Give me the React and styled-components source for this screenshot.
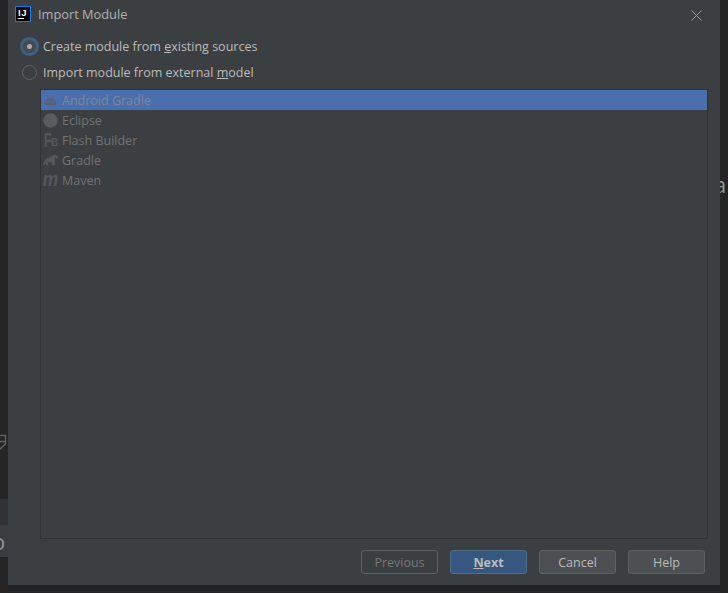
import React from 'react';
import styled, { createGlobalStyle } from 'styled-components';

const Global = createGlobalStyle`
  html, body { margin: 0; padding: 0; background: #242424; }
  #root { width: 728px; height: 593px; overflow: hidden; }
`;
const Page = styled.div`
  width: 728px; height: 593px; display: flex; align-items: flex-start; background: #232323;
  font-family: "Open Sans", "Noto Sans", sans-serif; font-size: 12.5px; color: #bbbbbb;
`;
const Side = styled.div`
  width: ${p => p.$w}px; height: 593px; flex: none; display: flex; flex-direction: column;
  overflow: hidden; background: #252525;
`;
const Band = styled.div`
  height: ${p => p.$h}px; flex: none; background: ${p => p.$bg || 'transparent'};
  display: flex; align-items: center;
`;
const ClippedLetter = styled.span`
  font: 22px/1 "Open Sans", sans-serif; color: #8f9498; flex: none; margin-left: ${p => p.$shift}px;
`;
const Dialog = styled.div`
  width: 712px; height: 585px; flex: none; background: #3c3f41; display: flex; flex-direction: column;
`;
const TitleBar = styled.div`
  height: 30px; flex: none; display: flex; align-items: center; padding: 0 18px 0 7px; gap: 7px;
`;
const Logo = styled.div`
  width: 16px; height: 16px; box-sizing: border-box; background: #000; border: 1px solid #087cfa; flex: none;
  display: flex; flex-direction: column; align-items: flex-start; padding: 2px 0 0 2px;
  color: #fff; font: 700 9.5px/7px "Liberation Sans", sans-serif; letter-spacing: 0.5px; margin-top: -2px;
`;
const LogoBar = styled.div`
  width: 6px; height: 1px; background: #fff; margin-top: 2px;
`;
const Title = styled.div`
  flex: 1; color: #afb1b3; margin-top: -2px; font-size: 12.8px;
`;
const Radios = styled.div`
  padding: 7px 0 0 14px; display: flex; flex-direction: column; gap: 8px; height: 59px; box-sizing: border-box; flex: none;
`;
const RadioRow = styled.div`
  display: flex; align-items: center; height: 18px; gap: 6px;
`;
const RadioOuter = styled.div`
  width: 15px; height: 15px; border-radius: 50%; flex: none; box-sizing: border-box;
  display: flex; align-items: center; justify-content: center;
  background: ${p => p.$on ? '#474b4e' : '#3c3f41'};
  border: 1px solid ${p => p.$on ? '#3d6185' : '#606263'};
  box-shadow: ${p => p.$on ? '0 0 0 2px #3d6185' : 'none'};
`;
const RadioDot = styled.div`
  width: 5px; height: 5px; border-radius: 50%; background: #a7a9ab;
`;
const Mn = styled.span`text-decoration: underline;`;
const ListBox = styled.div`
  margin: 0 12px 0 32px; height: 450px; flex: none; border: 1px solid #323232; box-sizing: border-box;
  display: flex; flex-direction: column;
`;
const Item = styled.div`
  height: 20px; flex: none; display: flex; align-items: center; padding-left: 2px; gap: 4px;
  color: #707274; background: ${p => p.$sel ? '#4b6eaf' : 'transparent'};
  ${p => p.$sel ? 'color: #7f8794;' : ''}
`;
const IconBox = styled.div`
  width: 15px; height: 16px; flex: none; display: flex; align-items: center; justify-content: center;
`;
const FbIcon = styled.div`
  width: 15px; height: 16px; flex: none; display: flex; align-items: flex-end; padding-left: 1px; box-sizing: border-box;
  color: #54575a; font-family: "Liberation Sans", sans-serif; font-weight: 700;
`;
const FbBig = styled.span`
  width: 7px; font-size: 20px; line-height: 16px; transform: scaleX(0.62); transform-origin: left center;
`;
const FbSmall = styled.span`
  width: 7px; font-size: 11px; line-height: 11px; transform: scaleX(0.9); transform-origin: left center;
`;
const MText = styled.span`
  font: italic 700 21px/16px "Liberation Sans", sans-serif; color: #54575a; margin-top: -2px; transform: scaleX(0.85);
`;
const Footer = styled.div`
  flex: 1; display: flex; justify-content: flex-end; align-items: flex-start; gap: 12px;
  padding: 11px 15px 0 0;
`;
const Btn = styled.div`
  width: 77px; height: 24px; box-sizing: border-box; border-radius: 3px; display: flex; align-items: center; justify-content: center;
  border: 1px solid ${p => p.$primary ? '#4c708c' : '#5e6060'};
  background: ${p => p.$primary ? '#365880' : p.$off ? 'transparent' : '#4c5052'};
  color: ${p => p.$off ? '#777777' : '#bbbbbb'};
  font-weight: ${p => p.$primary ? 700 : 400};
`;

const Close = () => (
  <svg width="11" height="11" viewBox="0 0 11 11" fill="none" stroke="#9a9c9e" strokeWidth="1">
    <path d="M.5.5l10 10M10.500.5l-10 10" />
  </svg>
);
const Android = () => (
  <svg width="13" height="10" viewBox="0 0 13 10">
    <path d="M.5 10C.5 6 3 3 6.500 3S12.500 6 12.500 10z" fill="#58607a" />
    <path d="M3 .300l1.800 3.200M10 .300l-1.800 3.200" stroke="#58607a" fill="none" />
    <circle cx="4" cy="7" r="1" fill="#4b6eaf" />
    <circle cx="9" cy="7" r="1" fill="#4b6eaf" />
  </svg>
);
const Eclipse = () => (
  <svg width="15" height="15" viewBox="0 0 15 15"><circle cx="7.500" cy="7.500" r="7.200" fill="#595c5e" /></svg>
);
const Elephant = () => (
  <svg width="16" height="12" viewBox="0 0 16 12" fill="#54575a">
    <path d="M0 11.500C.5 6.500 3.500 3 8 3 9.500 1 12.500-.5 14.800 1.300c1.300 1.200 1.200 3 .4 3.300-1 .3-1.200-1.300-2.400-1L12.500 11.500H9.500V8.500H5.500V11.500H3V9L1.200 11.500z" />
  </svg>
);
const Shield = () => (
  <svg width="7" height="18" viewBox="0 0 7 18" fill="none" stroke="#5f6163" strokeWidth="1.500"><path d="M-1 1.500H5.500V10L-1 16M-1 7.500H5" /></svg>
);

export default function App() {
  return (
    <Page>
      <Global />
      <Side $w={8}>
        <Band $h={434} />
        <Band $h={18}><Shield /></Band>
        <Band $h={47} />
        <Band $h={26} $bg="#303234" />
        <Band $h={32} $bg="#3a3c3e"><ClippedLetter $shift={-8}>o</ClippedLetter></Band>
      </Side>
      <Dialog>
        <TitleBar>
          <Logo>IJ<LogoBar /></Logo>
          <Title>Import Module</Title>
          <Close />
        </TitleBar>
        <Radios>
          <RadioRow><RadioOuter $on><RadioDot /></RadioOuter><span>Create module from <Mn>e</Mn>xisting sources</span></RadioRow>
          <RadioRow><RadioOuter /><span>Import module from external <Mn>m</Mn>odel</span></RadioRow>
        </Radios>
        <ListBox>
          <Item $sel><IconBox><Android /></IconBox>Android Gradle</Item>
          <Item><IconBox><Eclipse /></IconBox>Eclipse</Item>
          <Item><FbIcon><FbBig>F</FbBig><FbSmall>B</FbSmall></FbIcon>Flash Builder</Item>
          <Item><IconBox><Elephant /></IconBox>Gradle</Item>
          <Item><IconBox><MText>m</MText></IconBox>Maven</Item>
        </ListBox>
        <Footer>
          <Btn $off>Previous</Btn>
          <Btn $primary><span><Mn>N</Mn>ext</span></Btn>
          <Btn>Cancel</Btn>
          <Btn>Help</Btn>
        </Footer>
      </Dialog>
      <Side $w={8}>
        <Band $h={173} />
        <Band $h={22}><ClippedLetter $shift={-6}>a</ClippedLetter></Band>
      </Side>
    </Page>
  );
}
